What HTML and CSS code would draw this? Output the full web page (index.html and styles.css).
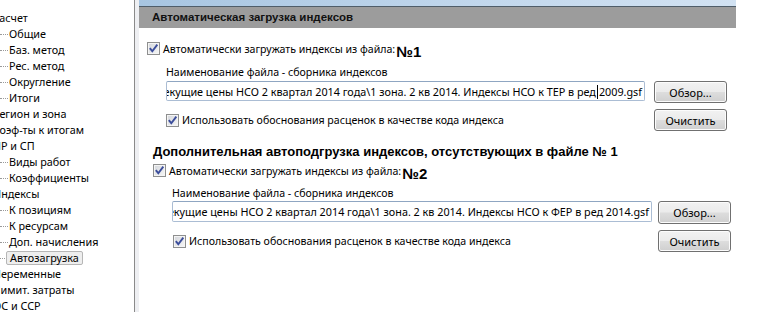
FILE: index.html
```html
<!DOCTYPE html>
<html lang="ru">
<head>
    <meta charset="UTF-8">
    <meta name="viewport" content="width=device-width, initial-scale=1.0">
    <title>Параметры сметы</title>
    <link rel="stylesheet" href="styles.css">
</head>
<body>
<div class="window">
    <div class="tree">
        <ul class="tree-list">
            <li class="node">Расчет</li>
            <li class="leaf">Общие</li>
            <li class="leaf">Баз. метод</li>
            <li class="leaf">Рес. метод</li>
            <li class="leaf">Округление</li>
            <li class="leaf">Итоги</li>
            <li class="node">Регион и зона</li>
            <li class="node">Коэф-ты к итогам</li>
            <li class="node">НР и СП</li>
            <li class="leaf">Виды работ</li>
            <li class="leaf">Коэффициенты</li>
            <li class="node">Индексы</li>
            <li class="leaf">К позициям</li>
            <li class="leaf">К ресурсам</li>
            <li class="leaf">Доп. начисления</li>
            <li class="leaf selected"><span>Автозагрузка</span></li>
            <li class="node">Переменные</li>
            <li class="node">Лимит. затраты</li>
            <li class="node">ОС и ССР</li>
        </ul>
    </div>
    <div class="splitter"></div>

    <div class="panel">
        <div class="panel-strip"></div>
        <div class="panel-title">Автоматическая загрузка индексов</div>

        <div class="section first">
            <label class="check-row">
                <span class="cb"><svg width="11" height="11" viewBox="0 0 11 11"><path d="M1.8 5.2 L4.3 8.2 L9.3 1.6" fill="none" stroke="#3b4d9b" stroke-width="1.9"/></svg></span>
                Автоматически загружать индексы из файла:<b class="num">№1</b>
            </label>
            <div class="group">
                <div class="caption">Наименование файла - сборника индексов</div>
                <div class="file-row">
                    <div class="path"><span>C:\Сметы\Индексы\Текущие цены НСО 2 квартал 2014 года\1 зона. 2 кв 2014. Индексы НСО к ТЕР в ред<i class="caret"></i>2009.gsf</span></div>
                    <button class="btn">Обзор...</button>
                </div>
                <div class="opt-row">
                    <label class="check-row">
                        <span class="cb"><svg width="11" height="11" viewBox="0 0 11 11"><path d="M1.8 5.2 L4.3 8.2 L9.3 1.6" fill="none" stroke="#3b4d9b" stroke-width="1.9"/></svg></span>
                        Использовать обоснования расценок в качестве кода индекса
                    </label>
                    <button class="btn">Очистить</button>
                </div>
            </div>
        </div>

        <div class="section second">
            <h2 class="section-title">Дополнительная автоподгрузка индексов, отсутствующих в файле № 1</h2>
            <label class="check-row">
                <span class="cb"><svg width="11" height="11" viewBox="0 0 11 11"><path d="M1.8 5.2 L4.3 8.2 L9.3 1.6" fill="none" stroke="#3b4d9b" stroke-width="1.9"/></svg></span>
                Автоматически загружать индексы из файла:<b class="num">№2</b>
            </label>
            <div class="group">
                <div class="caption">Наименование файла - сборника индексов</div>
                <div class="file-row">
                    <div class="path"><span>C:\Сметы\Индексы\Текущие цены НСО 2 квартал 2014 года\1 зона. 2 кв 2014. Индексы НСО к ФЕР в ред 2014.gsf</span></div>
                    <button class="btn">Обзор...</button>
                </div>
                <div class="opt-row">
                    <label class="check-row">
                        <span class="cb"><svg width="11" height="11" viewBox="0 0 11 11"><path d="M1.8 5.2 L4.3 8.2 L9.3 1.6" fill="none" stroke="#3b4d9b" stroke-width="1.9"/></svg></span>
                        Использовать обоснования расценок в качестве кода индекса
                    </label>
                    <button class="btn">Очистить</button>
                </div>
            </div>
        </div>
    </div>
</div>
</body>
</html>
```

FILE: styles.css
```css
html, body {
    margin: 0;
    padding: 0;
}
body {
    width: 762px;
    height: 312px;
    overflow: hidden;
    background: #fff;
    font-family: "Noto Sans", sans-serif;
    font-size: 10.6px;
    color: #000;
}
.window {
    display: flex;
    height: 312px;
}

/* left tree */
.tree {
    width: 134px;
    flex: none;
    overflow: hidden;
    font-size: 10.8px;
}
.tree-list {
    list-style: none;
    margin: 10px 0 0 -7px;
    padding: 0;
}
.tree-list li {
    height: 16px;
    line-height: 16px;
    white-space: nowrap;
}
.tree-list .leaf {
    display: flex;
    align-items: center;
    padding-left: 7px;
}
.tree-list .leaf::before {
    content: "";
    width: 8px;
    margin-right: 1px;
    border-top: 1px dotted #9a9a9a;
}
.tree-list .selected::before {
    width: 5px;
}
.tree-list .selected span {
    line-height: 12px;
    padding: 0 3px;
    border: 1px solid #b6b6b6;
    border-radius: 2px;
    background: #eeeeee;
}
.splitter {
    width: 4px;
    flex: none;
    border-left: 1px solid #8a8a8a;
    background: #eeeff2;
}

/* right panel */
.panel {
    width: 597px;
    flex: none;
}
.panel-strip {
    height: 6px;
    background: linear-gradient(90deg, #a7c5e1, #c3d8ed 60%, #d2e2f2);
    border-bottom: 1px solid #4f5d69;
}
.panel-title {
    height: 21px;
    line-height: 21px;
    padding-left: 13px;
    background: #9c9c9c;
    font-family: "Liberation Sans", Arial, sans-serif;
    font-weight: bold;
    font-size: 11.5px;
    color: #111;
}
.section.first {
    padding: 13px 9px 0 8px;
}
.section.second {
    padding: 12px 5px 0 14px;
}
.section-title {
    margin: 0;
    font-family: "Liberation Sans", Arial, sans-serif;
    font-size: 13px;
    font-weight: bold;
    line-height: 18px;
}
.second .section-title + .check-row {
    margin-top: 2px;
}
.check-row {
    display: flex;
    align-items: center;
    height: 15px;
    white-space: nowrap;
}
.cb {
    width: 13px;
    height: 13px;
    box-sizing: border-box;
    margin-right: 3px;
    border: 1px solid #8e8f8f;
    background: linear-gradient(135deg, #d3d6db, #f7f7f7);
    box-shadow: inset 0 0 0 1px #f4f4f4;
    display: flex;
    align-items: center;
    justify-content: center;
    flex: none;
}
.num {
    font-family: "Liberation Sans", Arial, sans-serif;
    font-size: 15px;
    margin: 6px 0 0 1px;
}
.group {
    padding-left: 19px;
}
.caption {
    margin-top: 9px;
    line-height: 15px;
}
.second .caption {
    margin-top: 8px;
}
.file-row {
    display: flex;
    align-items: flex-start;
    gap: 9px;
    margin-top: 1px;
}
.second .file-row {
    gap: 6px;
    margin-top: 0;
}
.path {
    flex: 1;
    height: 20px;
    box-sizing: border-box;
    display: flex;
    align-items: center;
    justify-content: flex-end;
    overflow: hidden;
    white-space: nowrap;
    padding-right: 2px;
    font-size: 10.8px;
    border: 1px solid #abbdd4;
    border-top-color: #8fa6c2;
    border-radius: 2px;
}
.second .path {
    height: 21px;
}
.caret {
    display: inline-block;
    width: 1px;
    height: 14px;
    background: #000;
    vertical-align: -3px;
    margin: 0 1px;
}
.btn {
    width: 73px;
    height: 22px;
    flex: none;
    padding: 0;
    font-family: "Noto Sans", sans-serif;
    font-size: 11px;
    color: #000;
    border: 1px solid #707070;
    border-radius: 3px;
    background: linear-gradient(#f2f2f2 0%, #ebebeb 48%, #dddddd 52%, #cfcfcf 100%);
    box-shadow: inset 0 0 0 1px #fcfcfc;
}
.second .file-row .btn {
    height: 23px;
}
.opt-row {
    display: flex;
    align-items: center;
    justify-content: space-between;
    height: 22px;
    margin-top: 6px;
}
.second .opt-row .check-row {
    margin-left: 1px;
}
```
